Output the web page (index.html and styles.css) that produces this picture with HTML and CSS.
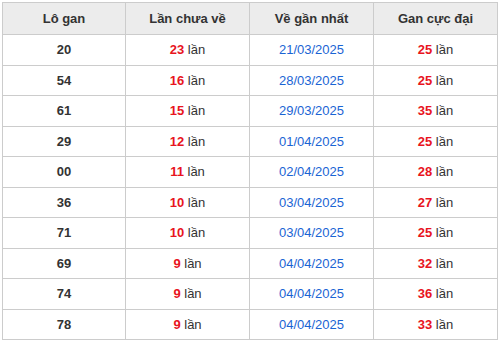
FILE: index.html
```html
<!DOCTYPE html>
<html lang="vi">
<head>
<meta charset="utf-8">
<link rel="stylesheet" href="styles.css">
</head>
<body>
<table class="gan">
<thead>
<tr><th>Lô gan</th><th>Lần chưa về</th><th>Về gần nhất</th><th>Gan cực đại</th></tr>
</thead>
<tbody>
<tr><td class="num">20</td><td><b class="red">23</b> lần</td><td class="date">21/03/2025</td><td><b class="red">25</b> lần</td></tr>
<tr><td class="num">54</td><td><b class="red">16</b> lần</td><td class="date">28/03/2025</td><td><b class="red">25</b> lần</td></tr>
<tr><td class="num">61</td><td><b class="red">15</b> lần</td><td class="date">29/03/2025</td><td><b class="red">35</b> lần</td></tr>
<tr><td class="num">29</td><td><b class="red">12</b> lần</td><td class="date">01/04/2025</td><td><b class="red">25</b> lần</td></tr>
<tr><td class="num">00</td><td><b class="red">11</b> lần</td><td class="date">02/04/2025</td><td><b class="red">28</b> lần</td></tr>
<tr><td class="num">36</td><td><b class="red">10</b> lần</td><td class="date">03/04/2025</td><td><b class="red">27</b> lần</td></tr>
<tr><td class="num">71</td><td><b class="red">10</b> lần</td><td class="date">03/04/2025</td><td><b class="red">25</b> lần</td></tr>
<tr><td class="num">69</td><td><b class="red">9</b> lần</td><td class="date">04/04/2025</td><td><b class="red">32</b> lần</td></tr>
<tr><td class="num">74</td><td><b class="red">9</b> lần</td><td class="date">04/04/2025</td><td><b class="red">36</b> lần</td></tr>
<tr><td class="num">78</td><td><b class="red">9</b> lần</td><td class="date">04/04/2025</td><td><b class="red">33</b> lần</td></tr>
</tbody>
</table>
</body>
</html>
```
FILE: styles.css
```css
html, body {
  margin: 0;
  padding: 0;
  background: #fff;
}
body {
  padding: 2px 4px 0 2px;
  font-family: "Liberation Sans", Arial, sans-serif;
  font-size: 13px;
  color: #333;
}
.gan {
  width: 496px;
  border-collapse: collapse;
  table-layout: fixed;
}
.gan th, .gan td {
  border: 1px solid #cccccc;
  text-align: center;
  padding: 0;
}
.gan th {
  background: #ececec;
  font-weight: bold;
  height: 31px;
  color: #333;
}
.gan td {
  height: 29.5px;
}
.gan th:first-child, .gan td:first-child {
  width: 122px;
}
.num {
  font-weight: bold;
}
.red {
  color: #e8141e;
}
.date {
  color: #1a64d4;
}
```
